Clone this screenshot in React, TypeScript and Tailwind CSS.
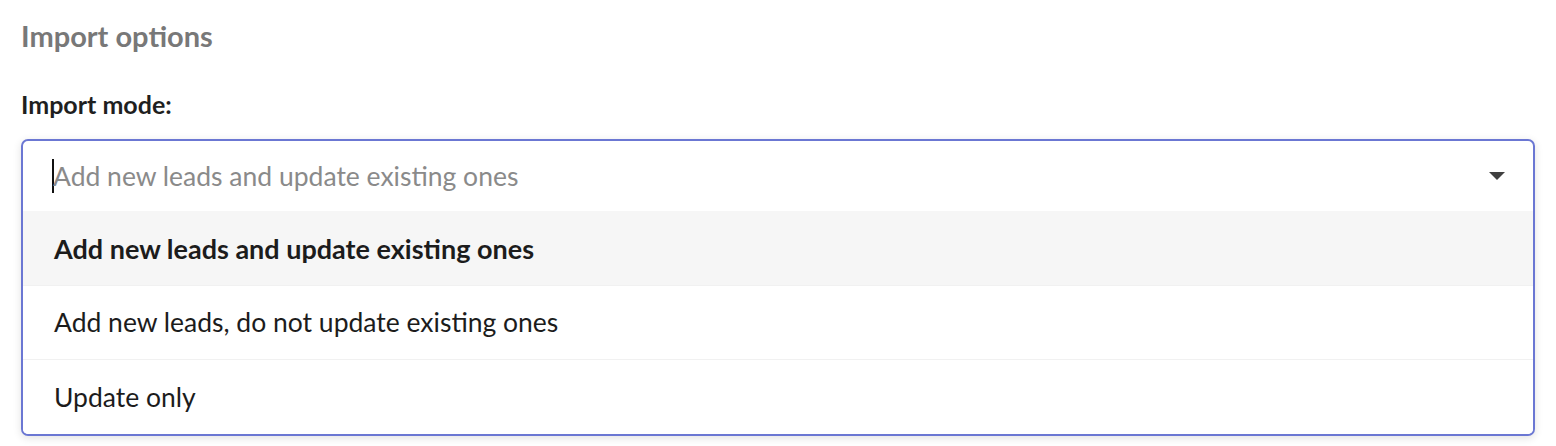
import React from "react";

const font = { fontFamily: "Lato, 'Noto Sans', sans-serif" };

export default function App() {
  const options = [
    { label: "Add new leads and update existing ones", active: true },
    { label: "Add new leads, do not update existing ones", active: false },
    { label: "Update only", active: false },
  ];
  return (
    <div className="w-[1556px] h-[446px] bg-white px-[21px] overflow-hidden" style={font}>
      <div className="h-[70px] flex items-center">
        <h2 className="text-[29px] leading-none font-bold text-[#787878]">Import options</h2>
      </div>
      <div className="h-[69px] flex items-center">
        <label className="text-[25px] leading-none font-bold text-[#1f1f1f]">Import mode:</label>
      </div>
      <div className="border-2 border-[#6b77d3] rounded-[7px] shadow-[0_2px_8px_rgba(0,0,0,0.12)] bg-white overflow-hidden">
        <div className="h-[70px] flex items-center pl-[29px] pr-[28px] relative">
          <span className="w-[2px] h-[34px] bg-[#111] mr-[-1px]" />
          <span className="text-[26.5px] text-[#8a8a8a] leading-none">Add new leads and update existing ones</span>
          <span className="ml-auto w-0 h-0 border-l-[8px] border-r-[8px] border-t-[8px] border-l-transparent border-r-transparent border-t-[#404040]" />
        </div>
        {options.map((o, i) => (
          <div
            key={i}
            className={
              "flex items-center pl-[31px] leading-none text-[#1c1c1c] " +
              (i === 0 ? "h-[75px] " : "h-[74px] ") +
              (i < 2 ? "border-b border-[#f1f1f1] " : "") +
              (o.active ? "bg-[#f6f6f6] font-bold text-[27px]" : "bg-white text-[26.5px]")
            }
          >
            {o.label}
          </div>
        ))}
      </div>
    </div>
  );
}
